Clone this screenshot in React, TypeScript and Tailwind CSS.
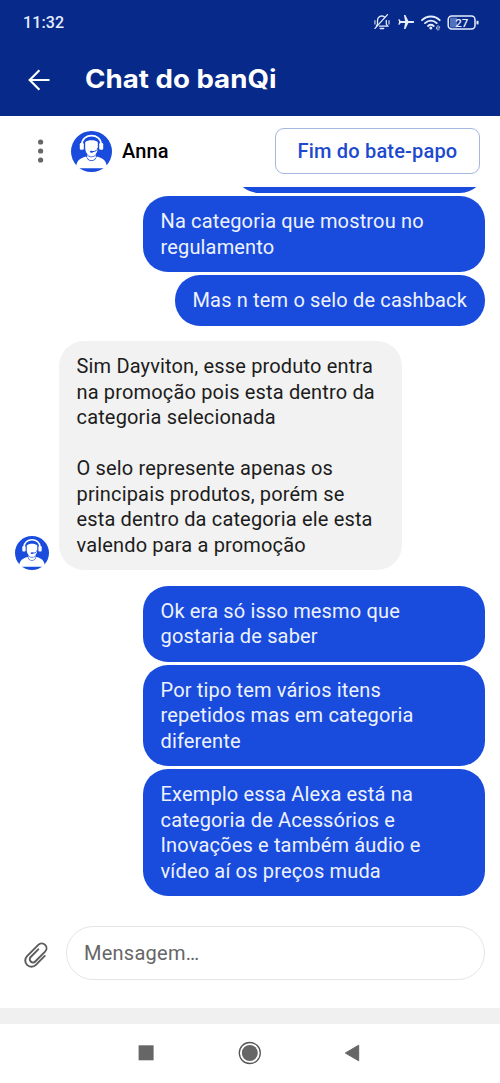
import { FC } from "react";

interface MessageGroup {
  from: "agent" | "user";
  className: string;
  messages: { lines: string[]; className: string }[];
}

const messageGroups: MessageGroup[] = [
  {
    from: "user",
    className: "",
    messages: [
      {
        lines: ["Na categoria que mostrou no", "regulamento"],
        className: "w-[342.5px]",
      },
      { lines: ["Mas n tem o selo de cashback"], className: "w-[310.5px]" },
    ],
  },
  {
    from: "agent",
    className: "mt-[15.5px]",
    messages: [
      {
        lines: [
          "Sim Dayviton, esse produto entra",
          "na promoção pois esta dentro da",
          "categoria selecionada",
          "",
          "O selo represente apenas os",
          "principais produtos, porém se",
          "esta dentro da categoria ele esta",
          "valendo para a promoção",
        ],
        className: "w-[342.5px]",
      },
    ],
  },
  {
    from: "user",
    className: "mt-[15.5px]",
    messages: [
      {
        lines: ["Ok era só isso mesmo que", "gostaria de saber"],
        className: "w-[342.5px]",
      },
      {
        lines: [
          "Por tipo tem vários itens",
          "repetidos mas em categoria",
          "diferente",
        ],
        className: "w-[342.5px]",
      },
      {
        lines: [
          "Exemplo essa Alexa está na",
          "categoria de Acessórios e",
          "Inovações e também áudio e",
          "vídeo aí os preços muda",
        ],
        className: "w-[342.5px]",
      },
    ],
  },
];

export default function App() {
  return (
    <div className="flex h-[1083px] w-[500px] flex-col overflow-hidden bg-white font-['Roboto',sans-serif]">
      <StatusBar />
      <TitleBar />
      <AgentBar />
      <main className="h-[727px] overflow-hidden">
        <div className="ml-auto mr-[15px] h-[6.5px] w-[251px] overflow-hidden">
          <div className="-mt-[44.5px] h-[51px] rounded-[25px] bg-[#194bdd]" />
        </div>
        <div className="pt-[3px]">
          {messageGroups.map((group, index) => (
            <Group key={`group-${index}`} {...group} />
          ))}
        </div>
      </main>
      <Composer />
      <div className="h-4 shrink-0 bg-[#f0f0f0]" />
      <SystemNav />
    </div>
  );
}

const StatusBar = () => {
  return (
    <div className="flex h-[44px] shrink-0 items-center justify-between bg-[#072989] pl-[23px] pr-[20px] text-[#e6edff]">
      <span className="pt-[2px] text-base font-medium tracking-[0.15px]">
        11:32
      </span>
      <svg width="107" height="18" viewBox="0 0 107 18" fill="none">
        {/* muted bell */}
        <g stroke="currentColor" strokeWidth="1.3" strokeLinecap="round">
          <path d="M4.5 11V7.8C4.5 4.8 6 3.2 9 2.8C10.3 3 11 3.4 11.7 4.2M13.3 7.5V11L14.8 13.2H6.5M4.5 11L3.4 13" />
          <path d="M2 15.4L14.5 1.6" />
          <path d="M7.3 15.5H10.6" strokeWidth="1.6" />
          <path d="M1.9 7.8V10.8M16 7.8V10.8" strokeWidth="1.8" opacity=".6" />
        </g>
        {/* airplane, nose to the right */}
        <path
          d="M41.2 9c0 .7-.6 1.1-1.4 1.1h-4.4l-3 5.9h-1.5l1.2-5.9h-4.4l-1.3 1.7h-1.1l.8-2.8-.8-2.8h1.1l1.3 1.7h4.4l-1.2-5.9h1.5l3 5.9h4.4c.8 0 1.4.4 1.4 1.1Z"
          fill="currentColor"
        />
        {/* wifi */}
        <g stroke="currentColor" strokeWidth="1.9" strokeLinecap="round">
          <path d="M49 7.2C54 2.2 61.7 2.2 66.7 7.2" />
          <path d="M52 10.1C55.5 6.9 60.2 6.9 63.7 10.1" />
          <path d="M55 13C56.7 11.6 59 11.6 60.7 13" />
        </g>
        <circle cx="57.8" cy="15" r="1.5" fill="currentColor" />
        <path
          d="M63.5 15h3.2c0-3-3.2-2.6-3.2 0s2.1 2 3 1.3"
          stroke="currentColor"
          opacity=".75"
        />
        {/* battery */}
        <rect x="77" y="4.6" width="7" height="10" fill="#5470bd" />
        <rect
          x="75.2"
          y="3"
          width="26.8"
          height="13"
          rx="3.5"
          stroke="currentColor"
          strokeWidth="1.5"
        />
        <path d="M104.5 7.8V11.4" stroke="currentColor" strokeWidth="2" />
        <text
          x="88.7"
          y="13.6"
          textAnchor="middle"
          fill="currentColor"
          fontSize="11.5"
          fontWeight="500"
        >
          27
        </text>
      </svg>
    </div>
  );
};

const TitleBar = () => {
  return (
    <header className="flex h-[71.5px] shrink-0 items-center bg-[#072989] pl-[28px] text-white">
      <svg width="22" height="22" viewBox="0 0 22 22" fill="none">
        <path
          d="M21.5 11H1.8M11.4 1.3L1.7 11L11.4 20.7"
          stroke="currentColor"
          strokeWidth="2.2"
        />
      </svg>
      <h1 className="-mt-px ml-[35px] origin-left scale-x-[1.085] font-['Inter',sans-serif] text-[25.5px] font-bold whitespace-nowrap">
        Chat do banQi
      </h1>
    </header>
  );
};

const AgentBar = () => {
  return (
    <div className="flex h-[71px] shrink-0 items-center pl-[37px] pr-[20px]">
      <svg width="7" height="24" viewBox="0 0 7 24" fill="#666">
        <circle cx="3.6" cy="3" r="2.6" />
        <circle cx="3.6" cy="12" r="2.6" />
        <circle cx="3.6" cy="21" r="2.6" />
      </svg>
      <Avatar className="ml-[27px] size-[41px]" />
      <span className="ml-[10px] text-[20px] font-medium tracking-[0.1px] text-black">
        Anna
      </span>
      <button className="ml-auto h-[46px] w-[205px] rounded-[9px] border border-[#a3b7e0] text-[20px] font-medium tracking-[0.18px] whitespace-nowrap text-[#1c49ce]">
        Fim do bate-papo
      </button>
    </div>
  );
};

const Group: FC<MessageGroup> = ({ from, className, messages }) => {
  const isUser = from === "user";

  return (
    <div
      className={`flex px-[15px] ${isUser ? "justify-end" : "items-end"} ${className}`}
    >
      {!isUser && <Avatar className="mr-[10px] size-[34px]" />}
      <div className="flex flex-col items-end gap-[3px]">
        {messages.map((message, index) => (
          <div
            key={`message-${index}`}
            className={`rounded-[25px] pr-[16px] pt-[13px] pb-[12px] text-[20px] leading-[25.5px] tracking-[0.16px] whitespace-nowrap ${
              isUser
                ? "bg-[#194bdd] pl-[18px] text-[#edf2ff]"
                : "bg-[#f2f2f2] pl-[17.5px] text-[#1c1c1c]"
            } ${message.className}`}
          >
            {message.lines.map((line, i) => (
              <p key={`line-${i}`} className="h-[25.5px]">
                {line}
              </p>
            ))}
          </div>
        ))}
      </div>
    </div>
  );
};

const Avatar: FC<{ className?: string }> = ({ className = "" }) => {
  return (
    <svg className={`shrink-0 ${className}`} viewBox="0 0 41 41" fill="none">
      <circle cx="20.5" cy="20.5" r="20.5" fill="#194bdd" />
      <path
        d="M4.8 37.2C5.5 30.5 7.7 27.2 15.3 25.4C16.5 31.5 24.5 31.5 25.7 25.4C33.3 27.2 35.5 30.5 36.2 37.2Z"
        fill="#fff"
      />
      <path d="M16.2 22.5h8.6v3.8c-1.2 3.8-7.4 3.8-8.6 0Z" fill="#fff" />
      <path
        d="M14.2 11.2C16.4 8.6 24.6 8.6 26.8 11.2V16.8C26.8 21.5 24 24.9 20.5 24.9S14.2 21.5 14.2 16.8Z"
        fill="#fff"
      />
      <path
        d="M10.8 13.5C10.8 1.6 30.2 1.6 30.2 13.5"
        stroke="#fff"
        strokeWidth="1.7"
      />
      <rect x="8.8" y="12" width="4" height="6.7" rx="1.2" fill="#fff" />
      <rect x="28.2" y="12" width="4" height="6.7" rx="1.2" fill="#fff" />
      <path
        d="M26.8 17C26.5 19.2 24.6 20.6 21.6 20.6"
        stroke="#194bdd"
        strokeWidth="1"
      />
      <ellipse cx="20.6" cy="20.7" rx="1.8" ry="1" fill="#194bdd" />
      <path
        d="M15.6 23.2C18 26.7 23 26.7 25.4 23.2"
        stroke="#194bdd"
        strokeWidth=".8"
      />
    </svg>
  );
};

const Composer = () => {
  return (
    <div className="flex h-[94px] shrink-0 pl-[21px] pr-[15px] pt-[12.5px]">
      <svg
        className="mt-[13.5px] size-[30px]"
        viewBox="0 0 28 28"
        fill="none"
        stroke="#5c5c5c"
        strokeWidth="1.8"
        strokeLinecap="round"
      >
        <path
          transform="rotate(45 14 14)"
          d="M20.4 8.8V20.6A5.8 5.8 0 0 1 8.8 20.6V5.8A4.5 4.5 0 0 1 17.8 5.8V18.8A3 3 0 0 1 11.8 18.8V8.8"
        />
      </svg>
      <div className="ml-[15px] flex h-[54px] flex-1 items-center rounded-full border border-[#e5e5e5] pl-[17px] text-[20px] tracking-[0.25px] text-[#666]">
        Mensagem…
      </div>
    </div>
  );
};

const SystemNav = () => {
  return (
    <nav className="flex h-[59.5px] shrink-0 items-center pl-[138px]">
      <svg width="16" height="16" viewBox="0 0 16 16">
        <rect x=".6" y=".3" width="15" height="15" fill="#666" />
      </svg>
      <svg className="ml-[84px]" width="24" height="24" viewBox="0 0 24 24">
        <circle
          cx="11.8"
          cy="12"
          r="10.5"
          fill="none"
          stroke="#555"
          strokeWidth="1.3"
        />
        <circle cx="11.8" cy="12" r="8" fill="#666" />
      </svg>
      <svg className="ml-[82px]" width="16" height="18" viewBox="0 0 16 18">
        <path
          d="M1.3 9L14.7 1.2V16.8Z"
          fill="#666"
          stroke="#666"
          strokeLinejoin="round"
        />
      </svg>
    </nav>
  );
};
